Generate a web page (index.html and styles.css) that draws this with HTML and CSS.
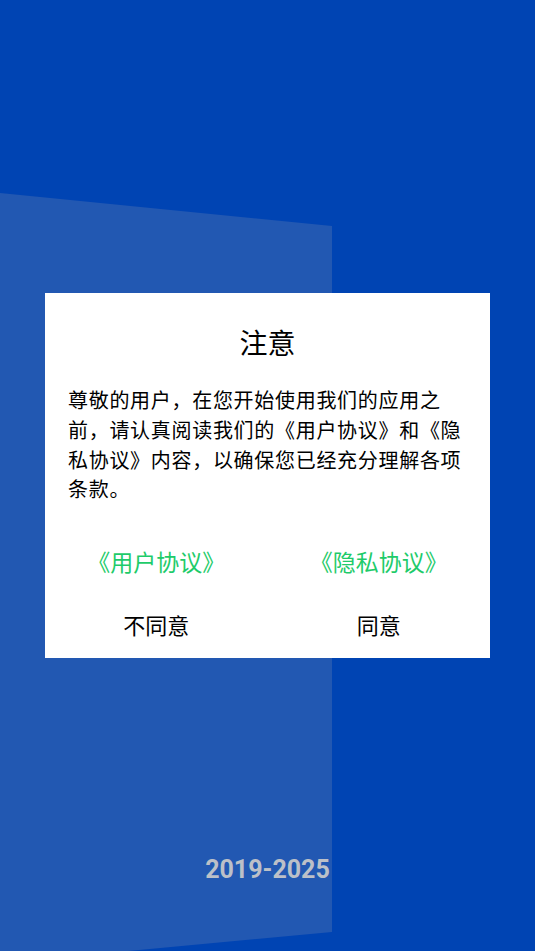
FILE: index.html
```html
<!DOCTYPE html>
<html lang="zh-CN">
<head>
    <meta charset="UTF-8">
    <meta name="viewport" content="width=device-width, initial-scale=1.0">
    <title>注意</title>
    <link rel="stylesheet" href="styles.css">
</head>
<body>
    <div class="page">
        <div class="backdrop"></div>

        <div class="dialog">
            <h2 class="dialog-title">注意</h2>
            <p class="dialog-text">尊敬的用户，在您开始使用我们的应用之前，请认真阅读我们的《用户协议》和《隐私协议》内容，以确保您已经充分理解各项条款。</p>
            <div class="links">
                <a href="#">《用户协议》</a>
                <a href="#">《隐私协议》</a>
            </div>
            <div class="actions">
                <button>不同意</button>
                <button>同意</button>
            </div>
        </div>

        <div class="footer">2019-2025</div>
    </div>
</body>
</html>
```

FILE: styles.css
```css
html, body {
    margin: 0;
    padding: 0;
}
body {
    font-family: "Noto Sans CJK SC", "Noto Sans", sans-serif;
    background: #0044b3;
}
.page {
    position: relative;
    height: 951px;
    overflow: hidden;
    display: grid;
    grid-template-rows: 1fr auto 1fr;
    justify-items: center;
}
.backdrop {
    position: absolute;
    left: 0;
    top: 0;
    width: 332px;
    height: 963px;
    background: #2258b2;
    clip-path: polygon(0 193px, 332px 226px, 332px 932px, 0 963px);
}
.dialog {
    grid-row: 2;
    position: relative;
    width: 445px;
    background: white;
    padding: 29px 0 14px;
    box-sizing: border-box;
}
.dialog-title {
    margin: 0 0 23px;
    text-align: center;
    font-size: 28px;
    font-weight: normal;
    line-height: 40px;
    color: #000;
}
.dialog-text {
    margin: 0;
    padding: 0 23px;
    font-size: 20px;
    letter-spacing: 0.7px;
    line-height: 29.6px;
    color: #000;
}
.links, .actions {
    display: grid;
    grid-template-columns: 1fr 1fr;
    text-align: center;
}
.links {
    margin-top: 41px;
}
.links a {
    font-size: 23px;
    line-height: 32px;
    color: #1ecb6a;
    text-decoration: none;
}
.actions {
    margin-top: 27px;
}
.actions button {
    background: none;
    border: none;
    padding: 0;
    font-family: inherit;
    font-size: 22px;
    line-height: 40px;
    color: #000;
    cursor: pointer;
}
.footer {
    grid-row: 3;
    align-self: end;
    position: relative;
    padding-bottom: 66px;
    font-family: Roboto, "Liberation Sans", sans-serif;
    font-weight: bold;
    font-size: 25px;
    line-height: 30px;
    color: #bcc0c8;
}
```
